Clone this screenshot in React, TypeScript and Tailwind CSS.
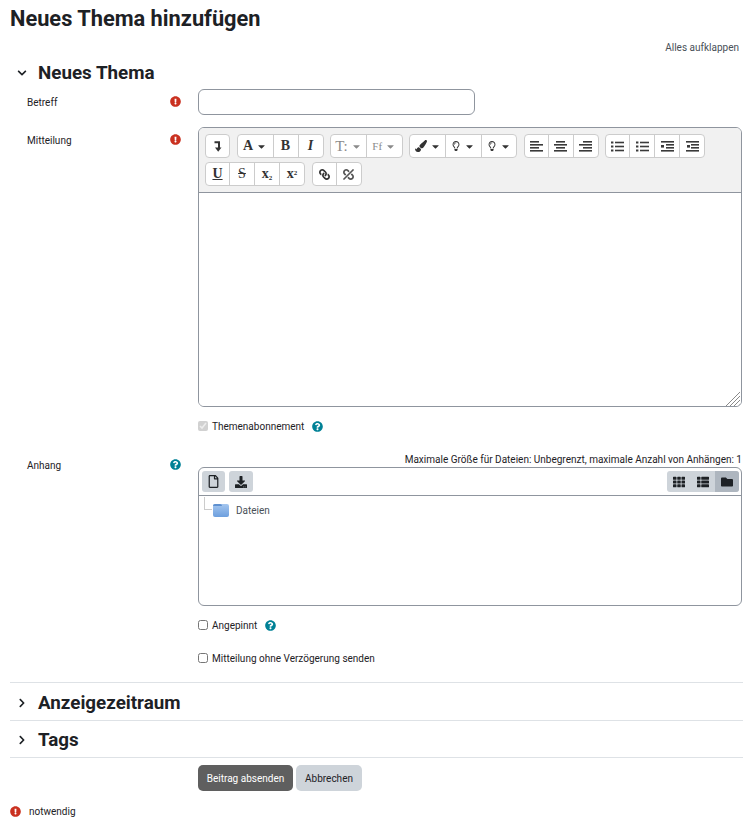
import type { ReactNode } from "react";
import {
  FaCaretDown,
  FaChevronDown,
  FaChevronRight,
  FaDownload,
  FaExclamationCircle,
  FaFolder,
  FaLink,
  FaPaintBrush,
  FaQuestionCircle,
  FaRegFile,
  FaRegLightbulb,
  FaTh,
  FaThList,
  FaUnlink,
} from "react-icons/fa";

type ToolItem = { icon: ReactNode; caret?: boolean; muted?: boolean };

// Serif letters used by the editor toolbar buttons
function Letter({ children, className = "" }: { children: ReactNode; className?: string }) {
  return (
    <span className={`font-['Liberation_Serif',serif] text-[14px] leading-none font-bold ${className}`}>{children}</span>
  );
}

function Lines({ bars, dots }: { bars: [number, number, number][]; dots?: boolean }) {
  return (
    <svg width="13" height="11" viewBox="0 0 13 11" fill="#3a3a3a">
      {bars.map(([x, y, w], i) => (
        <rect key={i} x={x} y={y} width={w} height="1.6" />
      ))}
      {dots ? (
        <>
          <rect x="0" y="0.5" width="2.4" height="2" />
          <rect x="0" y="4.5" width="2.4" height="2" />
          <rect x="0" y="8.5" width="2.4" height="2" />
        </>
      ) : null}
    </svg>
  );
}

const row1: ToolItem[][] = [
  [{ icon: <LevelDown /> }],
  [
    { icon: <Letter>A</Letter>, caret: true },
    { icon: <Letter>B</Letter> },
    { icon: <Letter className="italic">I</Letter> },
  ],
  [
    { icon: <span className="font-['Liberation_Serif',serif] text-[15px] leading-none">T:</span>, caret: true, muted: true },
    { icon: <span className="font-['Liberation_Serif',serif] text-[11px] leading-none">Ff</span>, caret: true, muted: true },
  ],
  [
    { icon: <FaPaintBrush size={12} />, caret: true },
    { icon: <FaRegLightbulb size={10} />, caret: true },
    { icon: <FaRegLightbulb size={10} />, caret: true },
  ],
  [
    { icon: <Lines bars={[[0, 0, 9], [0, 3, 13], [0, 6, 9], [0, 9, 13]]} /> },
    { icon: <Lines bars={[[2, 0, 9], [0, 3, 13], [2, 6, 9], [0, 9, 13]]} /> },
    { icon: <Lines bars={[[4, 0, 9], [0, 3, 13], [4, 6, 9], [0, 9, 13]]} /> },
  ],
  [
    { icon: <Lines dots bars={[[4, 0.7, 9], [4, 4.7, 9], [4, 8.7, 9]]} /> },
    { icon: <Lines dots bars={[[4, 0.7, 9], [4, 4.7, 9], [4, 8.7, 9]]} /> },
    { icon: <Lines bars={[[0, 0, 13], [5, 3, 8], [5, 6, 8], [0, 9, 13], [0, 4, 3], [0, 5, 3]]} /> },
    { icon: <Lines bars={[[0, 0, 13], [5, 3, 8], [5, 6, 8], [0, 9, 13], [1, 4, 3], [1, 5, 3]]} /> },
  ],
];

const row2: ToolItem[][] = [
  [
    { icon: <Letter className="underline">U</Letter> },
    { icon: <span className="font-['Liberation_Serif',serif] text-[14px] leading-none line-through">S</span> },
    { icon: <Letter className="text-[12px]">x<sub className="text-[7px]">2</sub></Letter> },
    { icon: <Letter className="text-[12px]">x<sup className="text-[7px]">2</sup></Letter> },
  ],
  [
    { icon: <FaLink size={11} className="-scale-x-100" /> },
    { icon: <FaUnlink size={11} className="-scale-x-100 text-[#555]" /> },
  ],
];

function LevelDown() {
  return (
    <svg width="8" height="11" viewBox="0 0 8 11">
      <path d="M0.5 1.2H5V7" fill="none" stroke="#333" strokeWidth="2" />
      <path d="M1 6.5H7.5L4.2 10.8Z" fill="#333" />
    </svg>
  );
}

function Required() {
  return <FaExclamationCircle size={11} className="text-[#ca3120]" />;
}

function Help() {
  return <FaQuestionCircle size={11} className="text-[#008196]" />;
}

function ToolGroup({ items }: { items: ToolItem[] }) {
  return (
    <div className="flex h-[24px] rounded-[4px] border border-[#ccc] bg-white">
      {items.map((item, i) => (
        <div
          key={i}
          className={`flex items-center justify-center gap-[3px] border-[#ccc] ${item.caret ? (i > 0 ? "w-[35.5px]" : "w-[35px]") : i > 0 ? "w-[25px]" : "w-[23px]"} ${i > 0 ? "border-l" : ""} ${item.muted ? "text-[#8a8a8a]" : "text-[#333]"}`}
        >
          {item.icon}
          {item.caret ? <FaCaretDown size={11} /> : null}
        </div>
      ))}
    </div>
  );
}

function SectionHeader({ title, open }: { title: string; open?: boolean }) {
  return (
    <div className="flex items-center">
      <div className="flex w-[28px] justify-start pl-[7px] text-[#1d2125]">
        {open ? <FaChevronDown size={10} /> : <FaChevronRight size={10} />}
      </div>
      <h3 className="text-[18.8px] leading-[22px] font-bold text-[#1d2125]">{title}</h3>
    </div>
  );
}

function FormRow({ label, icon, children }: { label?: string; icon?: ReactNode; children: ReactNode }) {
  return (
    <div className="grid grid-cols-[188px_544px]">
      <div className="flex items-start justify-between pt-[6px] pr-[17px] pl-[17px]">
        <span>{label}</span>
        {icon ? <span className="pt-[1px]">{icon}</span> : null}
      </div>
      <div>{children}</div>
    </div>
  );
}

function CheckLine({ label, help, checked }: { label: string; help?: boolean; checked?: boolean }) {
  return (
    <div className="flex h-[16px] items-center">
      <input
        type="checkbox"
        readOnly
        checked={!!checked}
        disabled={checked}
        className="m-0 mr-[4px] h-[10px] w-[10px]"
      />
      <span>{label}</span>
      {help ? (
        <span className="ml-[8px] flex">
          <Help />
        </span>
      ) : null}
    </div>
  );
}

export default function App() {
  return (
    <div className="min-h-[824px] bg-white px-[10px] font-['Roboto','Noto_Sans',sans-serif] text-[10px] leading-[15px] text-[#1d2125]">
      <h2 className="pt-[4px] text-[21.8px] leading-[30px] font-bold">Neues Thema hinzufügen</h2>

      <div className="mt-[6px] pr-[4px] text-right text-[#495057]">Alles aufklappen</div>

      <div className="mt-[7px]">
        <SectionHeader title="Neues Thema" open />
      </div>

      <div className="mt-[5px]">
        <FormRow label="Betreff" icon={<Required />}>
          <div className="h-[26px] w-[277px] rounded-[6px] border border-[#8f959e] bg-white" />
        </FormRow>
      </div>

      <div className="mt-[12px]">
        <FormRow label="Mitteilung" icon={<Required />}>
          <div className="h-[280px] overflow-hidden rounded-[6px] border border-[#8f959e]">
            <div className="flex h-[65px] flex-col gap-[4px] border-b border-[#8f959e] bg-[#f1f1f1] pt-[6px] pl-[6px]">
              <div className="flex gap-[6.5px]">
                {row1.map((g, i) => (
                  <ToolGroup key={i} items={g} />
                ))}
              </div>
              <div className="flex gap-[6.5px]">
                {row2.map((g, i) => (
                  <ToolGroup key={i} items={g} />
                ))}
              </div>
            </div>
            <div className="relative h-[214px] bg-white">
              <svg width="16" height="16" viewBox="0 0 16 16" className="absolute right-0 bottom-0" stroke="#8a8a8a">
                <path d="M1 15L15 1M5 15L15 5M9 15L15 9M13 15L15 13" />
              </svg>
            </div>
          </div>
          <div className="mt-[11px]">
            <CheckLine label="Themenabonnement" help checked />
          </div>
        </FormRow>
      </div>

      <div className="mt-[18px]">
        <FormRow label="Anhang" icon={<Help />}>
          <div className="mt-[1px] text-right leading-[14px] whitespace-nowrap">
            Maximale Größe für Dateien: Unbegrenzt, maximale Anzahl von Anhängen: 1
          </div>
          <div className="h-[139px] rounded-[6px] border border-[#8f959e]">
            <div className="flex h-[28px] items-center justify-between border-b border-[#8f959e] pr-[2px] pl-[3px]">
              <div className="flex gap-[4px]">
                <div className="flex h-[21px] w-[23px] items-center justify-center rounded-[3px] bg-[#ced4da] text-[#1d2125]">
                  <FaRegFile size={13} />
                </div>
                <div className="flex h-[21px] w-[24px] items-center justify-center rounded-[3px] bg-[#ced4da] text-[#1d2125]">
                  <FaDownload size={12} />
                </div>
              </div>
              <div className="flex h-[21px] overflow-hidden rounded-[3px] bg-[#ced4da] text-[#1d2125]">
                <div className="flex w-[24px] items-center justify-center">
                  <FaTh size={12} />
                </div>
                <div className="flex w-[24px] items-center justify-center">
                  <FaThList size={12} />
                </div>
                <div className="flex w-[24px] items-center justify-center bg-[#aeb6bf]">
                  <FaFolder size={12} />
                </div>
              </div>
            </div>
            <div className="flex pt-[8px] pl-[5px]">
              <div className="mt-[-7px] mr-[1px] h-[13px] w-[8px] border-b border-l border-[#ccc]" />
              <div className="relative h-[13px] w-[16px] rounded-[2px] bg-gradient-to-b from-[#a4c6ef] to-[#6d9fde]">
                <div className="absolute top-0 left-0 h-[2px] w-[9px] rounded-t-[2px] bg-[#5f90cf]" />
              </div>
              <span className="-mt-px ml-[7px] text-[#495057]">Dateien</span>
            </div>
          </div>
          <div className="mt-[11px]">
            <CheckLine label="Angepinnt" help />
          </div>
          <div className="mt-[17px]">
            <CheckLine label="Mitteilung ohne Verzögerung senden" />
          </div>
        </FormRow>
      </div>

      <div className="mt-[16px] border-t border-[#dee2e6] pt-[9px] pb-[6px]">
        <SectionHeader title="Anzeigezeitraum" />
      </div>
      <div className="border-t border-[#dee2e6] pt-[8px] pb-[6px]">
        <SectionHeader title="Tags" />
      </div>

      <div className="grid grid-cols-[188px_544px] border-t border-[#dee2e6] pt-[7px]">
        <div />
        <div className="flex gap-[3px]">
          <div className="flex h-[26px] w-[95px] items-center justify-center rounded-[5px] bg-[#5f5f5f] text-white">
            Beitrag absenden
          </div>
          <div className="flex h-[26px] w-[66px] items-center justify-center rounded-[5px] bg-[#ced4da]">
            Abbrechen
          </div>
        </div>
      </div>

      <div className="mt-[13px] flex items-center">
        <Required />
        <span className="ml-[8px]">notwendig</span>
      </div>
    </div>
  );
}
